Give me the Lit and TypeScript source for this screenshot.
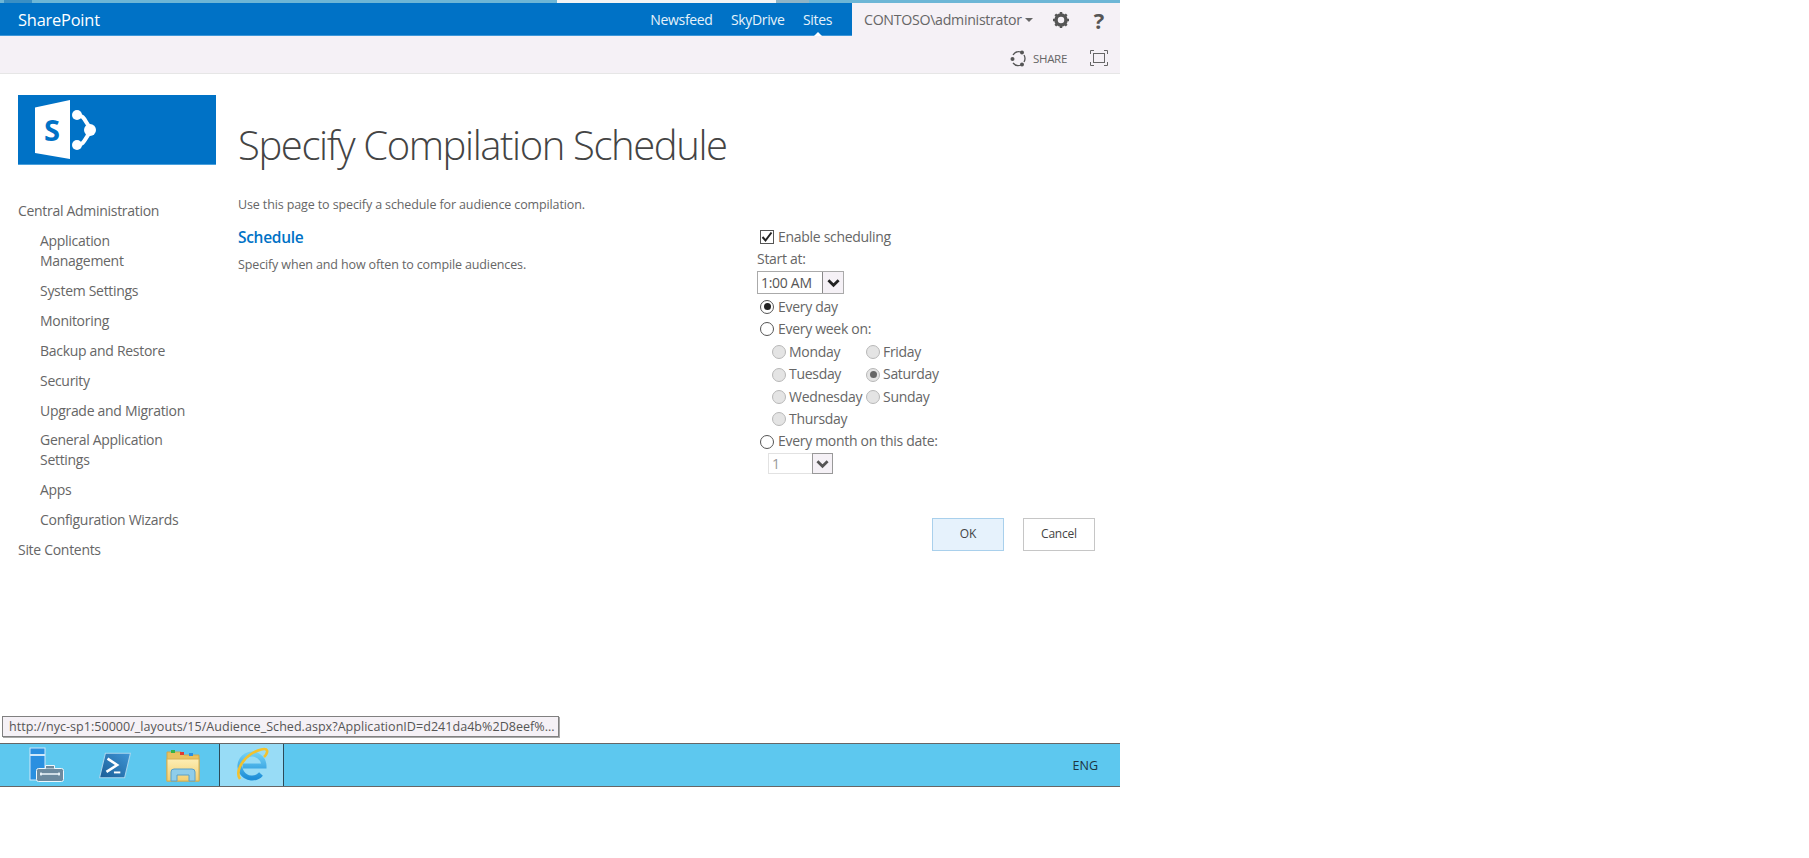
import { LitElement, html, css, svg } from 'lit';
import { customElement } from 'lit/decorators.js';

const NAV = [
  { label: 'Central Administration', top: true },
  { label: 'Application Management' },
  { label: 'System Settings' },
  { label: 'Monitoring' },
  { label: 'Backup and Restore' },
  { label: 'Security' },
  { label: 'Upgrade and Migration' },
  { label: 'General Application Settings' },
  { label: 'Apps' },
  { label: 'Configuration Wizards' },
  { label: 'Site Contents', top: true },
];

const DAYS = [
  { label: 'Monday' },
  { label: 'Friday' },
  { label: 'Tuesday' },
  { label: 'Saturday', on: true },
  { label: 'Wednesday' },
  { label: 'Sunday' },
  { label: 'Thursday' },
];

const chevron = svg`<path d="M3 5.500l4.500 4.500L12 5.500" fill="none" stroke="currentColor" stroke-width="2.400"/>`;

@customElement('app-root')
export class AppRoot extends LitElement {
  static styles = css`
    :host {
      display: block;
      position: relative;
      width: 1120px;
      height: 858px;
      font-family: 'Open Sans', 'Noto Sans', sans-serif;
      color: #666;
      background: #fff;
    }
    .strip {
      height: 3px;
      display: flex;
      background: #6db6d6;
    }
    .strip .d { width: 28px; margin: 0 525px 0 4px; background: #3a8fc4; }
    .strip .w { width: 219px; background: #f2f4f5; }
    .strip .m { width: 33px; background: #8fb4c6; }
    .suite {
      height: 33px;
      display: flex;
      background: #f5f1f6;
    }
    .suite .blue {
      width: 852px;
      flex: none;
      box-sizing: border-box;
      padding: 0 20px 0 18px;
      background: #0072c6;
      color: #fff;
      display: flex;
      align-items: center;
      justify-content: space-between;
      border-bottom: 1px solid #3e97d8;
    }
    .brand { font-size: 16.4px; letter-spacing: -0.2px; }
    .links { display: flex; gap: 18.5px; font-size: 14px; letter-spacing: -0.35px; color: #e6f2fb; }
    .links span { position: relative; }
    .links .cur::after {
      content: '';
      position: absolute;
      left: 50%;
      bottom: -7px;
      margin-left: -4px;
      border: 4px solid transparent;
      border-top: 0;
      border-bottom-color: #fff;
    }
    .user {
      flex: 1;
      display: flex;
      align-items: center;
      padding-left: 12px;
      font-size: 14.2px;
      letter-spacing: -0.3px;
      color: #666;
    }
    .user .caret {
      margin-left: 3px;
      border: 4px solid transparent;
      border-bottom: 0;
      border-top-color: #666;
    }
    .user svg { margin-left: 19px; flex: none; }
    .help { margin-left: 24px; font-size: 22px; font-weight: 700; color: #555; line-height: 1; }
    .ribbon {
      height: 38px;
      box-sizing: border-box;
      display: flex;
      align-items: center;
      justify-content: flex-end;
      padding: 7px 12px 0 0;
      gap: 6px;
      background: #f5f1f6;
      border-bottom: 1px solid #e6e6e6;
      font-size: 11.5px;
      letter-spacing: -0.3px;
    }
    .ribbon .focus { margin-left: 17px; }
    .body { display: flex; height: 669px; }
    .side { width: 198px; margin-left: 18px; flex: none; padding-top: 21px; }
    .logo {
      height: 70px;
      background: #0072c6;
      border-bottom: 1px solid #4aa0dc;
      display: flex;
      align-items: center;
      padding-left: 17px;
      box-sizing: border-box;
    }
    .nav { margin-top: 36px; font-size: 14px; line-height: 19.6px; letter-spacing: -0.3px; }
    .nav div { padding: 0 0 10.4px 22px; max-width: 155px; }
    .nav .top { padding-left: 0; max-width: none; }
    .main { flex: 1; margin-left: 22px; padding-top: 44px; min-width: 0; }
    h1 {
      margin: 0;
      font-weight: 300;
      font-size: 40px;
      line-height: 54px;
      color: #444;
      letter-spacing: -1.4px;
    }
    .intro { margin-top: 25px; font-size: 12.5px; line-height: 16px; letter-spacing: -0.12px; }
    .columns { display: flex; margin-top: 13px; }
    .desc { width: 519px; flex: none; font-size: 12.5px; letter-spacing: -0.13px; }
    h2 {
      margin: 0 0 8px;
      font-size: 15.5px;
      line-height: 22px;
      font-weight: 600;
      color: #0072c6;
      letter-spacing: -0.3px;
    }
    .form { flex: 1; font-size: 14px; line-height: 22.3px; letter-spacing: -0.3px; }
    .row { display: flex; align-items: center; padding-left: 3px; gap: 4px; }
    .box {
      width: 12px;
      height: 12px;
      border: 1px solid #555;
      display: flex;
      flex: none;
      align-items: center;
      justify-content: center;
      color: #222;
    }
    .radio {
      width: 12px;
      height: 12px;
      flex: none;
      border: 1px solid #555;
      border-radius: 50%;
      background: #fff;
      display: flex;
      align-items: center;
      justify-content: center;
    }
    .radio.on::after { content: ''; width: 7px; height: 7px; border-radius: 50%; background: #222; }
    .off { background: #e4e4e4; border-color: #b8b8b8; }
    .off.on::after { background: #666; }
    .select {
      display: flex;
      align-items: stretch;
      border: 1px solid #aaa;
      height: 23px;
      width: 87px;
      box-sizing: border-box;
      line-height: 21px;
      margin-bottom: 2px;
      color: #555;
    }
    .select .v { flex: 1; padding-left: 3px; }
    .select .a {
      width: 20px;
      border-left: 1px solid #888;
      background: #f5f1f6;
      display: flex;
      align-items: center;
      justify-content: center;
      color: #222;
    }
    .select.dis { width: 65px; margin-left: 11px; border-color: #e2e2e2; color: #999; height: 21px; line-height: 20px; }
    .select.dis .a { border: 1px solid #999; color: #555; margin: -1px; width: 19px; }
    .days {
      display: grid;
      grid-template-columns: 94px auto;
      margin-top: 1px;
      padding-left: 12px;
      justify-content: start;
      color: #666;
    }
    .days .row { gap: 3px; }
    .actions { display: flex; gap: 19px; justify-content: flex-end; margin: 44px 25px 0 0; }
    .btn {
      width: 72px;
      height: 33px;
      box-sizing: border-box;
      border: 1px solid #c6c6c6;
      display: flex;
      align-items: center;
      justify-content: center;
      font-size: 12px;
      letter-spacing: -0.2px;
      color: #444;
    }
    .btn.ok { background: #e6f2fc; border-color: #a9d0ec; }
    .tip {
      position: absolute;
      left: 2px;
      top: 716px;
      height: 21px;
      box-sizing: border-box;
      width: 557px;
      padding: 0 6px;
      border: 1px solid #808080;
      box-shadow: 1px 1px 0 #aaa;
      background: #f5f1f6;
      font-size: 12.55px;
      line-height: 19px;
      letter-spacing: 0.02px;
      color: #555;
      white-space: nowrap;
      overflow: hidden;
    }
    .bar {
      height: 42px;
      display: flex;
      align-items: stretch;
      background: #5dc8ef;
      border-top: 1px solid #666;
      border-bottom: 1px solid #666;
    }
    .gap { width: 13px; flex: none; }
    .app {
      width: 68px;
      flex: none;
      display: flex;
      align-items: center;
      justify-content: center;
      box-sizing: border-box;
    }
    .app.cur {
      width: 65px;
      margin: 0 1px 0 2px;
      background: #98dcf6;
      border: 1px solid #2c4a58;
      border-width: 0 1px;
    }
    .lang { margin-left: auto; align-self: center; padding-right: 22px; font-size: 12.5px; color: #1c3440; }
  `;

  renderRadio(on: boolean, off = false) {
    return html`<span class="radio ${on ? 'on' : ''} ${off ? 'off' : ''}"></span>`;
  }

  renderLogo() {
    return html`<svg width="62" height="60" viewBox="0 0 62 60">
      <path d="M0 7.500L35 0v59L0 53z" fill="#fff"/>
      <text x="9" y="41" font-family="Open Sans, sans-serif" font-weight="700" font-size="29" fill="#0072c6">S</text>
      <path d="M42 15c8 0 8 8 15 15-7 7-7 15-15 15" fill="none" stroke="#fff" stroke-width="4"/>
      <circle cx="42" cy="15" r="5" fill="#fff"/>
      <circle cx="42" cy="45" r="5" fill="#fff"/>
      <circle cx="55" cy="30" r="6" fill="#fff"/>
    </svg>`;
  }

  renderTaskIcons() {
    return html`
      <div class="app">
        <svg width="36" height="36" viewBox="0 0 36 36">
          <rect x="1" y="1" width="15" height="32" fill="#2a8fe0" stroke="#cfe8fa"/>
          <rect x="1" y="7" width="15" height="2" fill="#cfe8fa"/>
          <rect x="7.500" y="21.500" width="27" height="13" rx="2" fill="#6d8a9e" stroke="#eef7fc"/>
          <path d="M16.500 21.500v-3h9v3" fill="#6d8a9e" stroke="#eef7fc"/>
          <path d="M11 27h20M12 25.500v3M30 25.500v3" stroke="#f0f8fc" stroke-width="1.500"/>
        </svg>
      </div>
      <div class="app">
        <svg width="32" height="27" viewBox="0 0 30 25">
          <defs>
            <linearGradient id="ps" x1="1" y1="0" x2="0" y2="1">
              <stop offset="0" stop-color="#3f96d6"/>
              <stop offset="1" stop-color="#1a5d96"/>
            </linearGradient>
          </defs>
          <path d="M6 1h23.500L24 24H.5z" fill="url(#ps)" stroke="#a8d4ec"/>
          <path d="M8 6l9 6-10 6.500" fill="none" stroke="#fff" stroke-width="2.400"/>
          <path d="M14 19h6" stroke="#fff" stroke-width="1.800"/>
        </svg>
      </div>
      <div class="app">
        <svg width="34" height="33" viewBox="0 0 34 33">
          <defs>
            <linearGradient id="fld" x1="0" y1="0" x2="0" y2="1">
              <stop offset="0" stop-color="#fdeeb4"/>
              <stop offset="1" stop-color="#f3cf72"/>
            </linearGradient>
          </defs>
          <path d="M1 3h14l3 3h15v26H1z" fill="#e8c260" stroke="#cfa84c"/>
          <rect x="5" y="1" width="4" height="3" fill="#35b34a"/>
          <rect x="14" y="3" width="4" height="3" fill="#e03a30"/>
          <rect x="23" y="4" width="4" height="3" fill="#2a8fe0"/>
          <rect x="1" y="10" width="32" height="22" fill="url(#fld)" stroke="#d8b050"/>
          <path d="M5 32v-9q0-3 3-3h18q3 0 3 3v9h-6v-6H11v6z" fill="#8fcdea" stroke="#5aa0c8"/>
        </svg>
      </div>
      <div class="app cur">
        <svg width="36" height="36" viewBox="0 0 36 36">
          <defs>
            <linearGradient id="ie" x1="0" y1="0" x2="0" y2="1">
              <stop offset="0" stop-color="#6fcff5"/>
              <stop offset="1" stop-color="#1f8fd8"/>
            </linearGradient>
          </defs>
          <path d="M9 19h21A12 12 0 1 0 27 27" fill="none" stroke="url(#ie)" stroke-width="5"/>
          <path d="M6 32C1 25 8 13 17 7c7-4.500 15-6.500 16-3.500.6 1.800-1 4.500-3 6.500" fill="none" stroke="#f2c230" stroke-width="2.600"/>
        </svg>
      </div>
    `;
  }

  render() {
    return html`
      <div class="strip"><div class="d"></div><div class="w"></div><div class="m"></div></div>
      <div class="suite">
        <div class="blue">
          <span class="brand">SharePoint</span>
          <div class="links"><span>Newsfeed</span><span>SkyDrive</span><span class="cur">Sites</span></div>
        </div>
        <div class="user">
          CONTOSO\\administrator<span class="caret"></span>
          <svg width="18" height="18" viewBox="0 0 18 18">
            <circle cx="9" cy="9" r="5" fill="none" stroke="#555" stroke-width="3.500"/>
            <path d="M9 1v3M9 14v3M1 9h3M14 9h3M3.300 3.300l2.100 2.100M12.600 12.600l2.100 2.100M3.300 14.700l2.100-2.100M12.600 5.400l2.100-2.100" stroke="#555" stroke-width="2.500"/>
          </svg>
          <span class="help">?</span>
        </div>
      </div>
      <div class="ribbon">
        <svg width="17" height="17" viewBox="0 0 17 17">
          <path d="M3 5a7 7 0 0 1 8-3M14 5a7 7 0 0 1 0 7M11 15a7 7 0 0 1-8-2" fill="none" stroke="#555" stroke-width="1.300"/>
          <circle cx="2.500" cy="9" r="2" fill="#555"/><circle cx="12" cy="2.500" r="2" fill="#555"/><circle cx="12" cy="14.500" r="2" fill="#555"/>
        </svg>
        <span>SHARE</span>
        <svg class="focus" width="18" height="16" viewBox="0 0 18 16">
          <path d="M.5 4V.5H4M14 .5h3.500V4M.5 12v3.500H4M14 15.500h3.500V12" fill="none" stroke="#666"/>
          <rect x="3.500" y="3.500" width="11" height="9" fill="none" stroke="#666"/>
        </svg>
      </div>
      <div class="body">
        <div class="side">
          <div class="logo">${this.renderLogo()}</div>
          <div class="nav">
            ${NAV.map(n => html`<div class="${n.top ? 'top' : ''}">${n.label}</div>`)}
          </div>
        </div>
        <div class="main">
          <h1>Specify Compilation Schedule</h1>
          <div class="intro">Use this page to specify a schedule for audience compilation.</div>
          <div class="columns">
            <div class="desc">
              <h2>Schedule</h2>
              Specify when and how often to compile audiences.
            </div>
            <div class="form">
              <div class="row">
                <span class="box"><svg width="12" height="12" viewBox="0 0 12 12"><path d="M1.500 6l3 3.500L10.500 1.500" fill="none" stroke="currentColor" stroke-width="2"/></svg></span>
                Enable scheduling
              </div>
              <div>Start at:</div>
              <div class="select"><span class="v">1:00 AM</span><span class="a"><svg width="17" height="17" viewBox="0 0 15 15">${chevron}</svg></span></div>
              <div class="row">${this.renderRadio(true)}Every day</div>
              <div class="row">${this.renderRadio(false)}Every week on:</div>
              <div class="days">
                ${DAYS.map(d => html`<div class="row">${this.renderRadio(!!d.on, true)}${d.label}</div>`)}
              </div>
              <div class="row">${this.renderRadio(false)}Every month on this date:</div>
              <div class="select dis"><span class="v">1</span><span class="a"><svg width="17" height="17" viewBox="0 0 15 15">${chevron}</svg></span></div>
              <div class="actions">
                <div class="btn ok">OK</div>
                <div class="btn">Cancel</div>
              </div>
            </div>
          </div>
        </div>
      </div>
      <div class="tip">http://nyc-sp1:50000/_layouts/15/Audience_Sched.aspx?ApplicationID=d241da4b%2D8eef%...</div>
      <div class="bar">
        <div class="gap"></div>
        ${this.renderTaskIcons()}
        <span class="lang">ENG</span>
      </div>
    `;
  }
}
